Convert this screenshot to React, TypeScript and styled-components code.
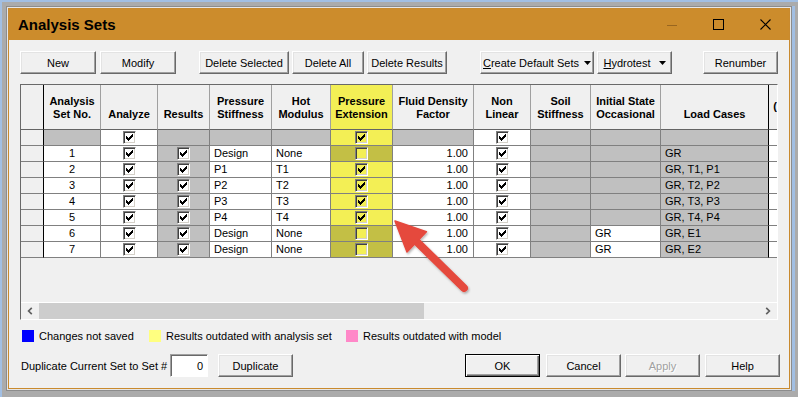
import React from 'react';
import styled, { createGlobalStyle } from 'styled-components';

const Global = createGlobalStyle`
  html, body { margin: 0; padding: 0; }
  body { background: #ababab; font-family: "Liberation Sans", Arial, sans-serif; }
`;

const GRAY = '#c0c0c0';
const WHITE = '#ffffff';
const HDR = '#f0f0f0';
const YEL = '#f3ef55';
const OLV = '#c3bf45';
const COLS = '23px 57px 57px 52px 62px 59px 62px 81px 57px 60px 70px 108px 8px';

const Shell = styled.div`
  position: relative;
  width: 798px;
  height: 397px;
  box-sizing: border-box;
  background: #ababab;
  border-left: 2px solid #a2bfe3;
  border-top: 2px solid #a2bfe3;
  padding: 6px 0 0 6px;
  overflow: hidden;
`;

const Window = styled.div`
  width: 782px;
  height: 381px;
  box-sizing: border-box;
  border: 1px solid #c98a2e;
  background: #f0f0f0;
  box-shadow: 0 0 0 1px #e6e6e6, 0 0 0 2px #8c8c8c, 3px 0 0 2px #a2bfe3;
  display: flex;
  flex-direction: column;
`;

const TitleBar = styled.div`
  height: 31px;
  flex: none;
  background: #cc8c2c;
  display: flex;
  align-items: center;
  padding-left: 9px;
`;

const Title = styled.div`
  font: bold 15px "Liberation Sans", Arial, sans-serif;
  color: #000;
  flex: 1;
`;

const Controls = styled.div`
  display: flex;
  height: 100%;
`;

const Ctl = styled.div`
  width: 47px;
  height: 100%;
  display: flex;
  align-items: center;
  justify-content: center;
`;

const Content = styled.div`
  flex: 1;
  display: flex;
  flex-direction: column;
  padding: 11px 11px 10px 11px;
`;

const Toolbar = styled.div`
  display: flex;
  height: 23px;
  flex: none;
`;

const Btn = styled.button<{ $w: number; $ml?: number; $default?: boolean; $disabled?: boolean; $gap?: number }>`
  width: ${(p) => p.$w}px;
  margin-left: ${(p) => p.$ml ?? 0}px;
  height: 23px;
  box-sizing: border-box;
  padding: 0;
  background: #f0f0f0;
  font: 11px "Liberation Sans", Arial, sans-serif;
  color: ${(p) => (p.$disabled ? '#a0a0a0' : '#000')};
  text-shadow: ${(p) => (p.$disabled ? '1px 1px 0 #fff' : 'none')};
  display: inline-flex;
  align-items: center;
  justify-content: center;
  gap: ${(p) => p.$gap ?? 0}px;
  border: 1px solid;
  border-color: ${(p) => (p.$default ? '#000' : '#fff #696969 #696969 #fff')};
  box-shadow: ${(p) =>
    p.$default
      ? 'inset 1px 1px 0 #fff, inset -1px -1px 0 #696969, inset -2px -2px 0 #a0a0a0'
      : 'inset -1px -1px 0 #a0a0a0, inset 1px 1px 0 #e3e3e3'};
  cursor: default;
`;

const GridFrame = styled.div`
  margin-top: 10px;
  height: 236px;
  flex: none;
  box-sizing: border-box;
  border: 1px solid;
  border-color: #696969 #ffffff #ffffff #696969;
  background: #f0f0f0;
  display: flex;
  flex-direction: column;
  overflow: hidden;
`;

const GridRow = styled.div`
  display: grid;
  grid-template-columns: ${COLS};
  flex: none;
`;

const HeaderCell = styled.div<{ $bg: string; $dark?: boolean; $last?: boolean }>`
  height: 45px;
  box-sizing: border-box;
  background: ${(p) => p.$bg};
  border-right: ${(p) => (p.$last ? 'none' : `1px solid ${p.$dark ? '#000' : '#a0a0a0'}`)};
  border-bottom: 1px solid #646464;
  font: bold 11px "Liberation Sans", Arial, sans-serif;
  line-height: 13px;
  color: #000;
  display: flex;
  align-items: ${(p) => (p.$last ? 'center' : 'flex-end')};
  justify-content: ${(p) => (p.$last ? 'flex-end' : 'center')};
  padding: ${(p) => (p.$last ? '0 0 2px 0' : '0 0 8px 0')};
  text-align: center;
  white-space: pre-line;
  overflow: hidden;
`;

const DataCell = styled.div<{ $bg: string; $align: 'l' | 'c' | 'r'; $dark?: boolean; $last?: boolean }>`
  height: 16px;
  box-sizing: border-box;
  background: ${(p) => p.$bg};
  border-right: ${(p) => (p.$last ? 'none' : `1px solid ${p.$dark ? '#000' : '#808080'}`)};
  border-bottom: 1px solid #808080;
  font: 11px "Liberation Sans", Arial, sans-serif;
  line-height: 15px;
  color: #000;
  display: flex;
  align-items: center;
  justify-content: ${(p) => (p.$align === 'l' ? 'flex-start' : p.$align === 'r' ? 'flex-end' : 'center')};
  padding: 0 ${(p) => (p.$align === 'r' ? 5 : 0)}px 0 ${(p) => (p.$align === 'l' ? 4 : 0)}px;
  white-space: nowrap;
  overflow: hidden;
`;

const Box = styled.span<{ $tint?: string }>`
  position: relative;
  display: inline-block;
  width: 13px;
  height: 13px;
  box-sizing: border-box;
  border: 1px solid;
  border-color: #808080 #ffffff #ffffff #808080;
  box-shadow: inset 1px 1px 0 #404040, inset -1px -1px 0 #d4d0c8;
  background: ${(p) => p.$tint ?? '#fff'};
  svg { position: absolute; left: 2px; top: 2px; }
`;

const Spacer = styled.div`
  flex: 1;
`;

const Scrollbar = styled.div`
  height: 17px;
  flex: none;
  box-sizing: border-box;
  border-top: 1px solid #ffffff;
  display: flex;
  background: #f0f0f0;
`;

const ScrollArrow = styled.div`
  width: 18px;
  display: flex;
  align-items: center;
  justify-content: center;
`;

const Thumb = styled.div`
  width: 385px;
  background: #cdcdcd;
`;

const Track = styled.div`
  flex: 1;
`;

const Legend = styled.div`
  margin-top: 10px;
  height: 12px;
  flex: none;
  display: flex;
  align-items: center;
  padding-left: 2px;
`;

const LegendItem = styled.div<{ $w?: number }>`
  display: flex;
  align-items: center;
  width: ${(p) => (p.$w ? `${p.$w}px` : 'auto')};
`;

const Swatch = styled.span<{ $c: string }>`
  width: 12px;
  height: 12px;
  background: ${(p) => p.$c};
  flex: none;
`;

const LegendText = styled.span`
  margin-left: 5px;
  font: 11px "Liberation Sans", Arial, sans-serif;
  color: #000;
  white-space: nowrap;
`;

const BottomRow = styled.div`
  margin-top: 12px;
  height: 23px;
  flex: none;
  display: flex;
  align-items: center;
  padding-left: 1px;
`;

const DupLabel = styled.span`
  width: 149px;
  font: 11px "Liberation Sans", Arial, sans-serif;
  color: #000;
  white-space: nowrap;
`;

const NumInput = styled.div`
  width: 38px;
  height: 23px;
  box-sizing: border-box;
  background: #fff;
  border: 1px solid;
  border-color: #a0a0a0 #ffffff #ffffff #a0a0a0;
  box-shadow: inset 1px 1px 0 #696969;
  margin-right: 10px;
  display: flex;
  align-items: center;
  justify-content: flex-end;
  padding-right: 4px;
  font: 11px "Liberation Sans", Arial, sans-serif;
`;

const RightGroup = styled.div`
  margin-left: auto;
  margin-right: -2px;
  display: flex;
`;

const ArrowLayer = styled.svg`
  position: absolute;
  left: 378px;
  top: 203px;
  pointer-events: none;
`;

const CheckMark = () => (
  <svg width="7" height="7" viewBox="0 0 7 7" shapeRendering="crispEdges">
    <path
      fill="#000"
      d="M6 0h1v1h-1z M5 1h2v1h-2z M0 2h1v1h-1z M4 2h3v1h-3z M0 3h2v1h-2z M3 3h3v1h-3z M0 4h5v1h-5z M1 5h3v1h-3z M2 6h1v1h-1z"
    />
  </svg>
);

const Check = ({ on, tint }: { on: boolean; tint?: string }) => <Box $tint={tint}>{on && <CheckMark />}</Box>;

const Tri = () => (
  <svg width="7" height="4" viewBox="0 0 7 4">
    <path d="M0 0h7L3.5 4z" fill="#000" />
  </svg>
);

type Spec = {
  bg: string;
  text?: string;
  align?: 'l' | 'c' | 'r';
  check?: boolean;
  tint?: string;
};

const headers = [
  '',
  'Analysis\nSet No.',
  'Analyze',
  'Results',
  'Pressure\nStiffness',
  'Hot\nModulus',
  'Pressure\nExtension',
  'Fluid Density\nFactor',
  'Non\nLinear',
  'Soil\nStiffness',
  'Initial State\nOccasional',
  'Load Cases',
  '(',
];

const sets = [
  { no: 1, ps: 'Design', hm: 'None', ext: false, init: '', lc: 'GR' },
  { no: 2, ps: 'P1', hm: 'T1', ext: true, init: '', lc: 'GR, T1, P1' },
  { no: 3, ps: 'P2', hm: 'T2', ext: true, init: '', lc: 'GR, T2, P2' },
  { no: 4, ps: 'P3', hm: 'T3', ext: true, init: '', lc: 'GR, T3, P3' },
  { no: 5, ps: 'P4', hm: 'T4', ext: true, init: '', lc: 'GR, T4, P4' },
  { no: 6, ps: 'Design', hm: 'None', ext: false, init: 'GR', lc: 'GR, E1' },
  { no: 7, ps: 'Design', hm: 'None', ext: false, init: 'GR', lc: 'GR, E2' },
];

const allRow: Spec[] = [
  { bg: HDR },
  { bg: GRAY },
  { bg: WHITE, check: true },
  { bg: GRAY },
  { bg: GRAY },
  { bg: GRAY },
  { bg: YEL, check: true, tint: YEL },
  { bg: GRAY },
  { bg: WHITE, check: true },
  { bg: GRAY },
  { bg: GRAY },
  { bg: GRAY },
  { bg: WHITE },
];

const rowSpecs: Spec[][] = [
  allRow,
  ...sets.map((s) => [
    { bg: HDR },
    { bg: WHITE, text: String(s.no), align: 'c' as const },
    { bg: WHITE, check: true },
    { bg: GRAY, check: true },
    { bg: WHITE, text: s.ps, align: 'l' as const },
    { bg: WHITE, text: s.hm, align: 'l' as const },
    { bg: s.ext ? YEL : OLV, check: s.ext, tint: YEL },
    { bg: WHITE, text: '1.00', align: 'r' as const },
    { bg: WHITE, check: true },
    { bg: GRAY },
    s.init ? { bg: WHITE, text: s.init, align: 'l' as const } : { bg: GRAY },
    { bg: GRAY, text: s.lc, align: 'l' as const },
    { bg: WHITE },
  ]),
];

const isDark = (i: number) => i === 0 || i === 11;
const isLast = (i: number) => i === headers.length - 1;

export default function App() {
  return (
    <>
      <Global />
      <Shell>
        <Window>
          <TitleBar>
            <Title>Analysis Sets</Title>
            <Controls>
              <Ctl>
                <svg width="10" height="10" viewBox="0 0 10 10">
                  <path d="M0 5.5h10" stroke="rgba(90,55,15,0.45)" strokeWidth="1" />
                </svg>
              </Ctl>
              <Ctl>
                <svg width="11" height="11" viewBox="0 0 11 11">
                  <rect x="0.5" y="0.5" width="10" height="10" fill="none" stroke="#000" strokeWidth="1" />
                </svg>
              </Ctl>
              <Ctl>
                <svg width="11" height="11" viewBox="0 0 11 11">
                  <path d="M0.5 0.5L10.5 10.5M10.5 0.5L0.5 10.5" stroke="#000" strokeWidth="1.1" />
                </svg>
              </Ctl>
            </Controls>
          </TitleBar>
          <Content>
            <Toolbar>
              <Btn $w={76}>New</Btn>
              <Btn $w={76} $ml={4}>Modify</Btn>
              <Btn $w={90} $ml={23}>Delete Selected</Btn>
              <Btn $w={72} $ml={3}>Delete All</Btn>
              <Btn $w={80} $ml={3}>Delete Results</Btn>
              <Btn $w={114} $ml={33} $gap={5}>
                <span>
                  <u>C</u>reate Default Sets
                </span>
                <Tri />
              </Btn>
              <Btn $w={75} $ml={3} $gap={8}>
                <span>
                  <u>H</u>ydrotest
                </span>
                <Tri />
              </Btn>
              <Btn $w={75} $ml={31}>Renumber</Btn>
            </Toolbar>

            <GridFrame>
              <GridRow>
                {headers.map((h, i) => (
                  <HeaderCell key={i} $bg={i === 6 ? YEL : HDR} $dark={isDark(i)} $last={isLast(i)}>
                    {h}
                  </HeaderCell>
                ))}
              </GridRow>
              {rowSpecs.map((row, r) => (
                <GridRow key={r}>
                  {row.map((c, i) => (
                    <DataCell key={i} $bg={c.bg} $align={c.align ?? 'c'} $dark={isDark(i)} $last={isLast(i)}>
                      {c.check !== undefined ? <Check on={c.check} tint={c.tint} /> : c.text}
                    </DataCell>
                  ))}
                </GridRow>
              ))}
              <Spacer />
              <Scrollbar>
                <ScrollArrow>
                  <svg width="6" height="8" viewBox="0 0 6 8">
                    <path d="M4.8 0.8L1.6 4l3.2 3.2" fill="none" stroke="#606060" strokeWidth="1.7" />
                  </svg>
                </ScrollArrow>
                <Thumb />
                <Track />
                <ScrollArrow>
                  <svg width="6" height="8" viewBox="0 0 6 8">
                    <path d="M1.2 0.8L4.4 4L1.2 7.2" fill="none" stroke="#606060" strokeWidth="1.7" />
                  </svg>
                </ScrollArrow>
              </Scrollbar>
            </GridFrame>

            <Legend>
              <LegendItem $w={127}>
                <Swatch $c="#0000ff" />
                <LegendText>Changes not saved</LegendText>
              </LegendItem>
              <LegendItem $w={197}>
                <Swatch $c="#ffff80" />
                <LegendText>Results outdated with analysis set</LegendText>
              </LegendItem>
              <LegendItem>
                <Swatch $c="#ff88c8" />
                <LegendText>Results outdated with model</LegendText>
              </LegendItem>
            </Legend>

            <BottomRow>
              <DupLabel>Duplicate Current Set to Set #</DupLabel>
              <NumInput>0</NumInput>
              <Btn $w={75}>Duplicate</Btn>
              <RightGroup>
                <Btn $w={75} $default>
                  OK
                </Btn>
                <Btn $w={75} $ml={6}>
                  Cancel
                </Btn>
                <Btn $w={75} $ml={4} $disabled>
                  Apply
                </Btn>
                <Btn $w={75} $ml={5}>
                  Help
                </Btn>
              </RightGroup>
            </BottomRow>
          </Content>
        </Window>

        <ArrowLayer width="100" height="100" viewBox="0 0 100 100">
          <defs>
            <filter id="arrowShadow" x="-20%" y="-20%" width="140%" height="140%">
              <feDropShadow dx="1" dy="1.5" stdDeviation="1.2" floodColor="#000" floodOpacity="0.3" />
            </filter>
          </defs>
          <g filter="url(#arrowShadow)">
            <path d="M36 36L84 83" stroke="#e5483d" strokeWidth="8" strokeLinecap="round" />
            <path
              d="M15 16L46.4 26.7L27 46.9Z"
              fill="#e5483d"
              stroke="#e5483d"
              strokeWidth="1.5"
              strokeLinejoin="round"
            />
          </g>
        </ArrowLayer>
      </Shell>
    </>
  );
}
